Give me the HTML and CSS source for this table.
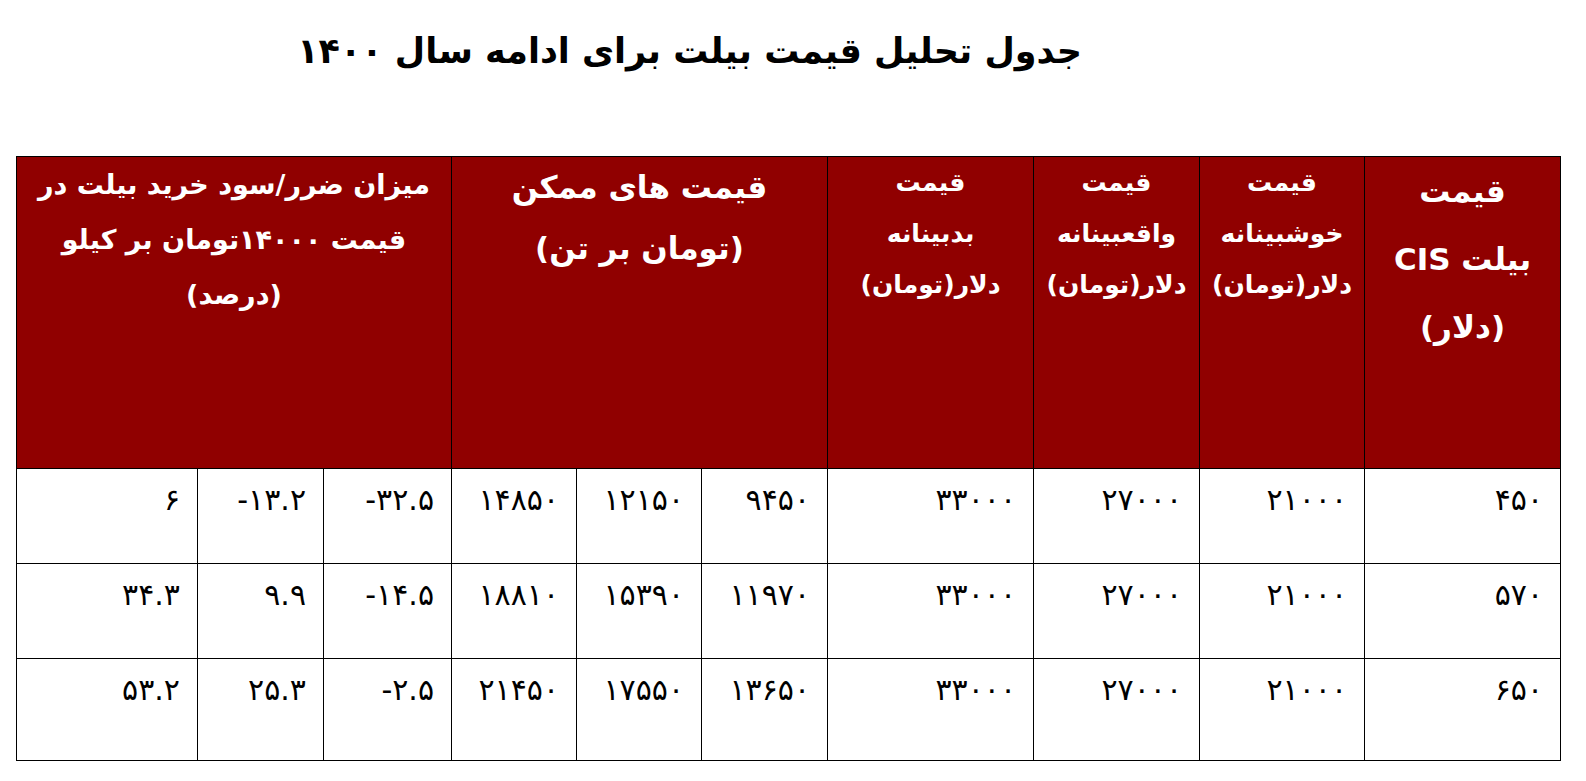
FILE: index.html
```html
<!DOCTYPE html>
<html lang="fa" dir="rtl">
<head>
<meta charset="utf-8">
<title>جدول تحلیل قیمت بیلت</title>
<link rel="stylesheet" href="styles.css">
</head>
<body>
<div class="page">
  <h1 class="title">جدول تحلیل قیمت بیلت برای ادامه سال ۱۴۰۰</h1>
  <table class="grid">
    <colgroup>
      <col class="c-cis">
      <col class="c-opt">
      <col class="c-real">
      <col class="c-bad">
      <col class="c-p1">
      <col class="c-p2">
      <col class="c-p3">
      <col class="c-r1">
      <col class="c-r2">
      <col class="c-r3">
    </colgroup>
    <thead>
      <tr class="head-row">
        <th class="h-big h-cis">قیمت<br>بیلت CIS<br>(دلار)</th>
        <th class="h-small">قیمت<br>خوشبینانه<br>دلار(تومان)</th>
        <th class="h-small">قیمت<br>واقعبینانه<br>دلار(تومان)</th>
        <th class="h-small">قیمت<br>بدبینانه<br>دلار(تومان)</th>
        <th class="h-big h-range" colspan="3">قیمت های ممکن<br>(تومان بر تن)</th>
        <th class="h-mid" colspan="3">میزان ضرر/سود خرید بیلت در<br>قیمت ۱۴۰۰۰تومان بر کیلو<br>(درصد)</th>
      </tr>
    </thead>
    <tbody>
      <tr class="row">
        <td>۴۵۰</td><td>۲۱۰۰۰</td><td>۲۷۰۰۰</td><td>۳۳۰۰۰</td>
        <td>۹۴۵۰</td><td>۱۲۱۵۰</td><td>۱۴۸۵۰</td>
        <td><span dir="ltr">-۳۲.۵</span></td><td><span dir="ltr">-۱۳.۲</span></td><td>۶</td>
      </tr>
      <tr class="row">
        <td>۵۷۰</td><td>۲۱۰۰۰</td><td>۲۷۰۰۰</td><td>۳۳۰۰۰</td>
        <td>۱۱۹۷۰</td><td>۱۵۳۹۰</td><td>۱۸۸۱۰</td>
        <td><span dir="ltr">-۱۴.۵</span></td><td>۹.۹</td><td>۳۴.۳</td>
      </tr>
      <tr class="row row-last">
        <td>۶۵۰</td><td>۲۱۰۰۰</td><td>۲۷۰۰۰</td><td>۳۳۰۰۰</td>
        <td>۱۳۶۵۰</td><td>۱۷۵۵۰</td><td>۲۱۴۵۰</td>
        <td><span dir="ltr">-۲.۵</span></td><td>۲۵.۳</td><td>۵۳.۲</td>
      </tr>
    </tbody>
  </table>
</div>
</body>
</html>
```

FILE: styles.css
```css
html, body {
  margin: 0;
  padding: 0;
  background: #ffffff;
}

body {
  font-family: "DejaVu Sans", "Noto Sans", sans-serif;
  color: #000000;
}

.page {
  padding: 0 25px 0 17px;
}

.title {
  margin: 0;
  height: 156px;
  box-sizing: border-box;
  padding: 25px 479px 0 0;
  font-size: 35px;
  font-weight: bold;
  line-height: 52px;
  text-align: right;
}

.grid {
  width: 1544px;
  table-layout: fixed;
  border-collapse: collapse;
  direction: rtl;
}

.c-cis { width: 196px; }
.c-opt { width: 165px; }
.c-real { width: 166px; }
.c-bad { width: 206px; }
.c-p1 { width: 126px; }
.c-p2 { width: 125px; }
.c-p3 { width: 125px; }
.c-r1 { width: 128px; }
.c-r2 { width: 126px; }
.c-r3 { width: 181px; }

.grid th,
.grid td {
  border: 1px solid #000000;
  vertical-align: top;
}

.head-row {
  height: 312px;
}

.grid th {
  background: #900000;
  color: #ffffff;
  font-weight: bold;
  text-align: center;
  padding: 0;
}

.h-small {
  font-size: 25px;
  line-height: 51px;
  padding-top: 2px;
}

.h-mid {
  font-size: 27px;
  line-height: 55px;
  padding-top: 3px;
}

.h-big {
  font-size: 31px;
}

.h-range {
  line-height: 61px;
  padding-top: 1px;
}

.h-cis {
  line-height: 68px;
}

.row {
  height: 95px;
}

.row-last {
  height: 102px;
}

.grid td {
  font-size: 30px;
  line-height: 34px;
  text-align: right;
  padding: 14px 17px 0 8px;
}
```
